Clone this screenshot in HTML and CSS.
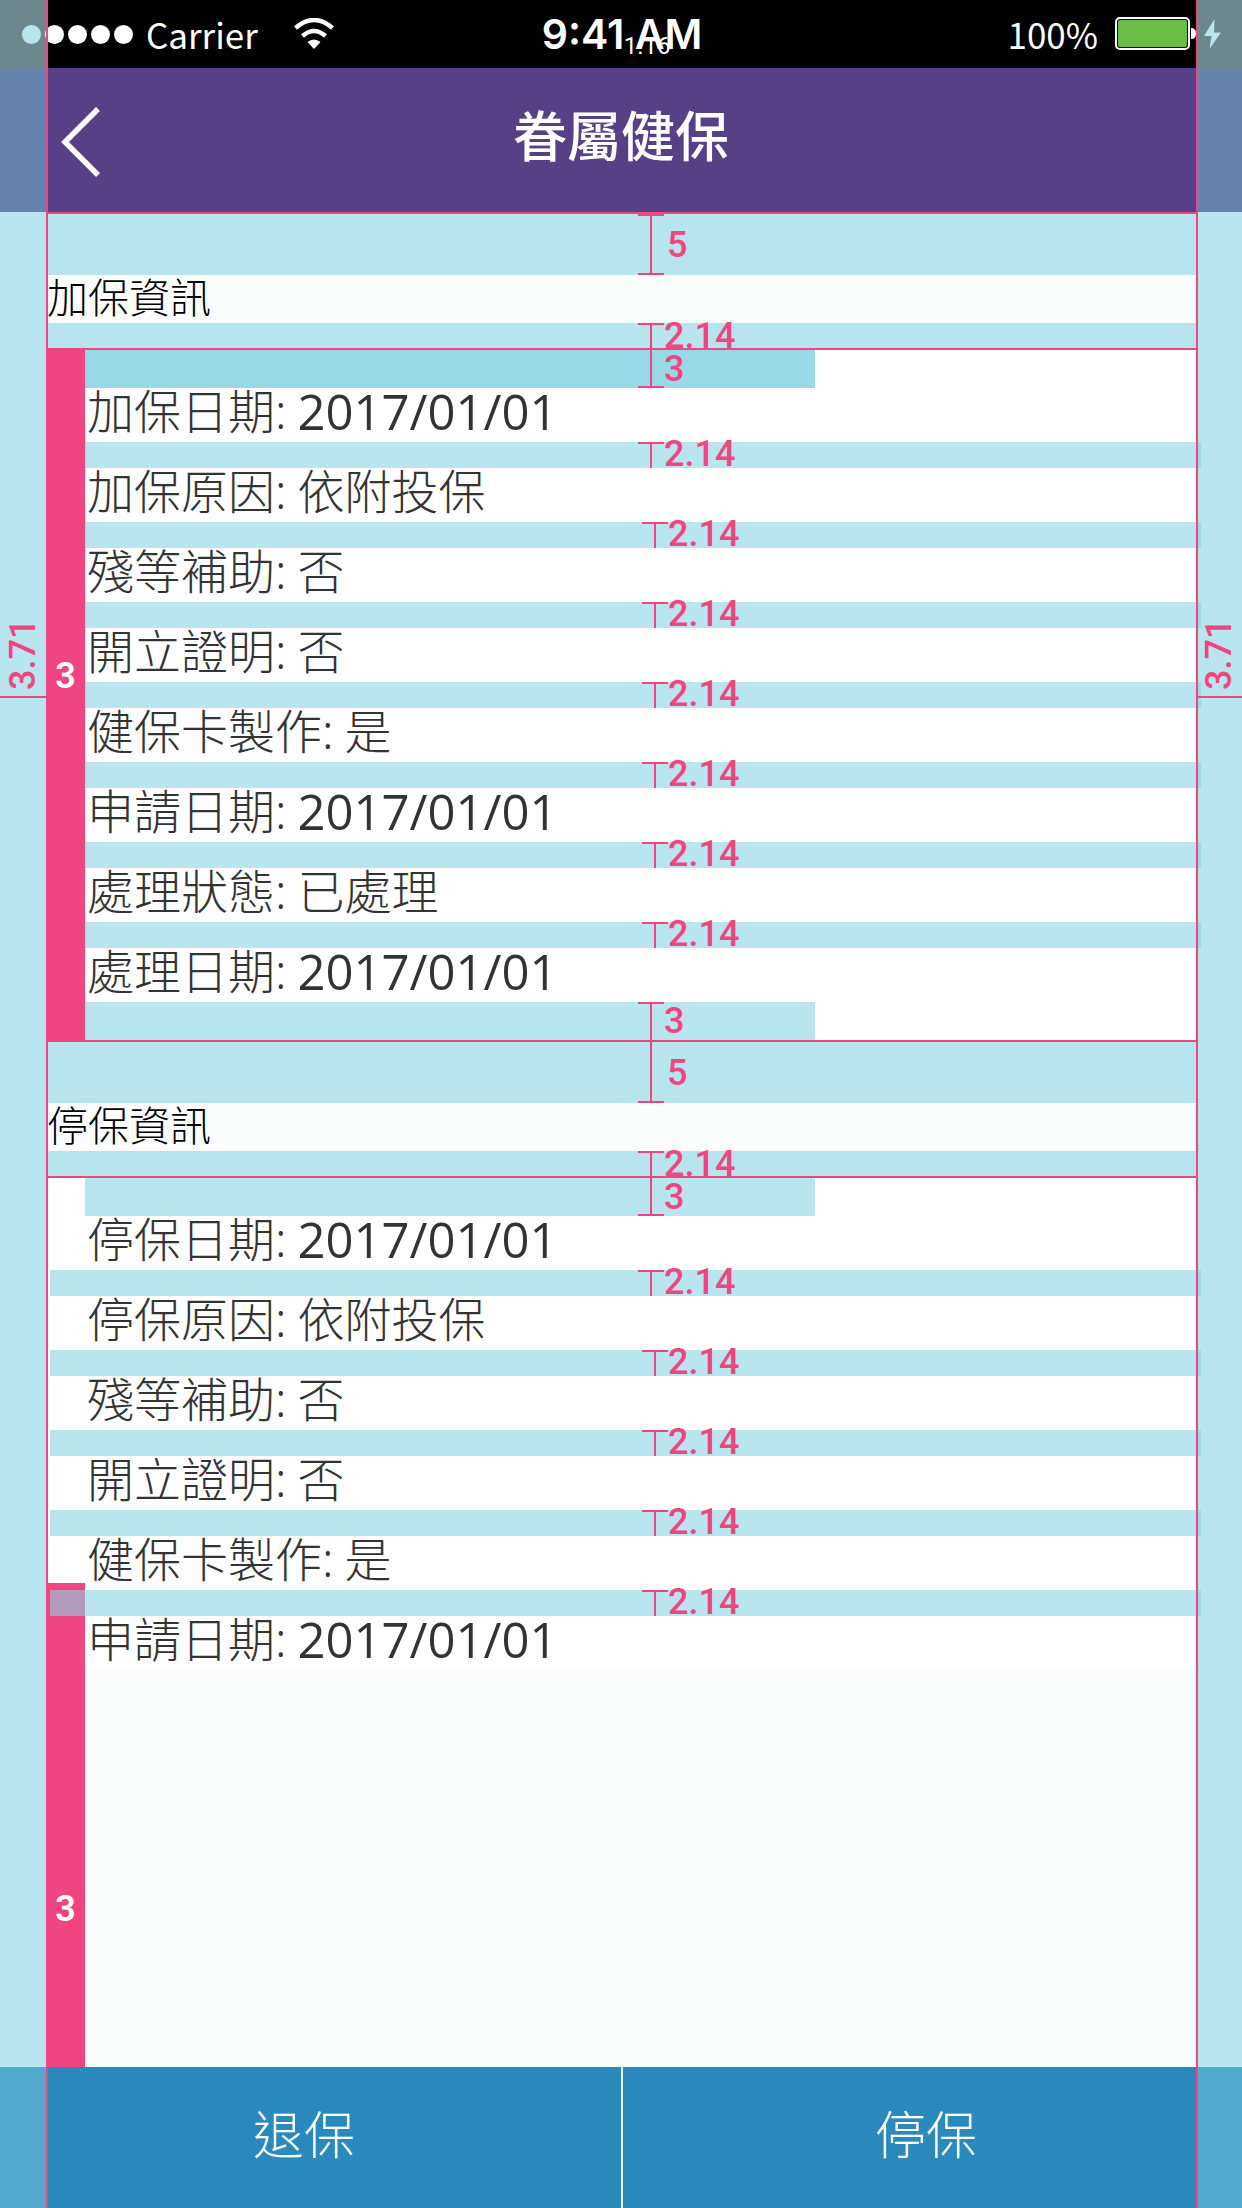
FILE: index.html
```html
<!DOCTYPE html>
<html lang="zh-Hant">
<head>
<meta charset="utf-8">
<meta name="viewport" content="width=device-width, initial-scale=1">
<title>眷屬健保</title>
<link rel="stylesheet" href="styles.css">
</head>
<body>
<div class="page">
  <div class="status">
    <div class="status-left">
      <span class="dots"><i class="dot dot-tinted"></i><i class="dot"></i><i class="dot"></i><i class="dot"></i><i class="dot"></i></span>
      <span class="carrier">Carrier</span>
      <svg class="wifi" width="40" height="32" viewBox="0 0 40 32" aria-hidden="true">
        <path d="M1.500 10Q20-6 38.500 10" fill="none" stroke="#fff" stroke-width="4.500"/>
        <path d="M8.500 18Q20 8 31.500 18" fill="none" stroke="#fff" stroke-width="4.500"/>
        <path d="M13.500 24Q20 19 26.500 24L20 31Z" fill="#fff"/>
      </svg>
    </div>
    <div class="clock">9:41 AM<span class="clock-note">1.16</span></div>
    <div class="status-right">
      <span class="percent">100%</span>
      <svg class="battery" width="82" height="34" viewBox="0 0 82 34" aria-hidden="true">
        <rect x="1" y="1" width="73" height="31" rx="4" fill="#000" stroke="#fff" stroke-width="2"/>
        <rect x="3" y="3" width="69" height="27" rx="2" fill="#6abd45"/>
        <path d="M76 11Q81 11 81 16.500T76 22Z" fill="#fff"/>
      </svg>
      <svg class="bolt" width="18" height="30" viewBox="0 0 18 30" aria-hidden="true">
        <path d="M10.500 0L0 17H7.500L5.500 30L17 13.500H10Z" fill="#b9e5ee"/>
      </svg>
    </div>
  </div>

  <header class="header">
    <button class="back" type="button" aria-label="返回">
      <svg width="40" height="70" viewBox="0 0 40 70" aria-hidden="true"><path d="M37 2L4 35L37 68" fill="none" stroke="#fff" stroke-width="5.500"/></svg>
    </button>
    <h1 class="title">眷屬健保</h1>
  </header>

  <main class="main">
    <section class="section">
      <div class="gap gap-5"><span class="ibeam"></span><span class="num">5</span></div>
      <h2 class="section-title">加保資訊</h2>
      <div class="gap gap-2"><span class="ibeam open"></span><span class="num">2.14</span></div>
      <div class="card">
        <div class="bar"><span>3</span></div>
        <div class="gap gap-3 strong"><span class="ibeam hang"></span><span class="num">3</span></div>
        <dl class="list">
          <div class="row"><dt>加保日期:</dt><dd class="date">2017/01/01</dd></div>
          <div class="row"><dt>加保原因:</dt><dd>依附投保</dd></div>
          <div class="row"><dt>殘等補助:</dt><dd>否</dd></div>
          <div class="row"><dt>開立證明:</dt><dd>否</dd></div>
          <div class="row"><dt>健保卡製作:</dt><dd>是</dd></div>
          <div class="row"><dt>申請日期:</dt><dd class="date">2017/01/01</dd></div>
          <div class="row"><dt>處理狀態:</dt><dd>已處理</dd></div>
          <div class="row"><dt>處理日期:</dt><dd class="date">2017/01/01</dd></div>
        </dl>
        <div class="gap gap-3"><span class="ibeam open"></span><span class="num">3</span></div>
      </div>
    </section>

    <section class="section section-last">
      <div class="gap gap-5"><span class="ibeam hang"></span><span class="num">5</span></div>
      <h2 class="section-title">停保資訊</h2>
      <div class="gap gap-2"><span class="ibeam open"></span><span class="num">2.14</span></div>
      <div class="card card-last">
        <div class="bar bar-low"><span>3</span></div>
        <div class="gap gap-3"><span class="ibeam hang"></span><span class="num">3</span></div>
        <dl class="list wide">
          <div class="row"><dt>停保日期:</dt><dd class="date">2017/01/01</dd></div>
          <div class="row"><dt>停保原因:</dt><dd>依附投保</dd></div>
          <div class="row"><dt>殘等補助:</dt><dd>否</dd></div>
          <div class="row"><dt>開立證明:</dt><dd>否</dd></div>
          <div class="row"><dt>健保卡製作:</dt><dd>是</dd></div>
          <div class="row"><dt>申請日期:</dt><dd class="date">2017/01/01</dd></div>
        </dl>
      </div>
    </section>
  </main>

  <footer class="actions">
    <button class="action" type="button">退保</button>
    <button class="action" type="button">停保</button>
  </footer>

  <div class="guides"></div>
  <div class="side side-left"><span>3.71</span></div>
  <div class="side side-right"><span>3.71</span></div>
</div>
</body>
</html>
```
FILE: styles.css
```css
:root {
  --pink: #ef4681;
  --band: rgba(138, 212, 227, .6);
  --gutter: 46px;
  --inset: 39px;
  --side: #b9e5ee;
}

*, *::before { box-sizing: border-box; }

body {
  margin: 0;
  font-family: "Noto Sans", "Noto Sans CJK TC", sans-serif;
}

h1, h2, dl, dd { margin: 0; }

button {
  padding: 0;
  border: 0;
  background: none;
  color: inherit;
  font: inherit;
}

.page {
  position: relative;
  display: flex;
  flex-direction: column;
  min-height: 100vh;
  background: #fbfdfc;
}

/* Every block paints its own tinted side margins */
.status, .header, .actions {
  background-image:
    linear-gradient(var(--side), var(--side)),
    linear-gradient(var(--side), var(--side));
  background-position: left, right;
  background-size: var(--gutter) 100%;
  background-repeat: no-repeat;
}

/* Status bar */
.status {
  --side: #6c888c;
  display: grid;
  grid-template-columns: 1fr auto 1fr;
  align-items: center;
  height: 68px;
  padding: 0 20px 0 22px;
  background-color: #000;
  color: #fff;
}

.status-left, .status-right { display: flex; align-items: center; }
.status-right { justify-content: flex-end; }
.dots { display: flex; gap: 4px; margin-right: 13px; }
.dot { width: 19px; height: 19px; border-radius: 50%; background: #fff; }
.dot-tinted { background: #b9e5ee; }
.carrier, .percent { font-family: "Noto Sans CJK TC", sans-serif; font-size: 35px; line-height: 66px; }
.wifi { margin-left: 36px; }
.battery { margin: 0 7px 0 17px; }
.clock { position: relative; font: 600 41px/68px Inter, sans-serif; }
.clock-note {
  position: absolute;
  left: 82px;
  top: 32px;
  font: 400 24px/28px Roboto, sans-serif;
}

/* Header */
.header {
  --side: #6683ae;
  display: grid;
  grid-template-columns: 1fr auto 1fr;
  align-items: center;
  height: 144px;
  padding: 4px 61px 0;
  background-color: #584086;
  color: #fff;
}

.back { justify-self: start; height: 70px; }
.back svg { display: block; }
.title { padding-bottom: 12px; font-size: 54px; font-weight: 500; line-height: 72px; }

/* Content */
.main {
  display: flex;
  flex: 1;
  flex-direction: column;
  border: solid #b9e5ee;
  border-width: 0 45px 0 46px;
}

.section { border-top: 2px solid var(--pink); }
.section-last { display: flex; flex: 1; flex-direction: column; }

.section-title {
  padding-left: 1px;
  height: 48px;
  font-size: 41px;
  font-weight: 300;
  line-height: 44px;
  color: #000;
}

.gap {
  display: flex;
  align-items: center;
  background: var(--band);
  color: var(--pink);
  font: 500 36px/26px Roboto, sans-serif;
}

.gap-5 { height: 61px; padding-left: 592px; }
.gap-2 { height: 25px; padding-left: 592px; }
.gap-3 { width: 730px; height: 38px; margin-left: var(--inset); padding-left: 553px; }
.gap-5 .num { margin-left: 3px; }
.strong { background: #97d9e6; }

.ibeam {
  align-self: stretch;
  width: 26px;
  border: solid var(--pink);
  border-width: 2px 0;
  background: linear-gradient(var(--pink), var(--pink)) center / 2px 100% no-repeat;
}
.open { border-bottom: 0; }
.hang { border-top: 0; }

.card { position: relative; border-top: 2px solid var(--pink); background: #fff; }
.card-last { flex: 1; background: linear-gradient(#fff 490px, #fbfdfc 490px); }

.bar {
  position: absolute;
  inset: 0 auto 0 0;
  width: var(--inset);
  padding-top: 308px;
  background: var(--pink);
  color: #fff;
  font: 600 36px/36px Roboto, sans-serif;
  text-align: center;
}
.bar-low { top: 405px; }

/* The bands between rows reach slightly into the right margin */
.list { position: relative; margin: 0 -4px 0 var(--inset); }

.row {
  display: flex;
  flex-wrap: wrap;
  align-content: flex-start;
  column-gap: 11px;
  height: 54px;
  padding-left: 2px;
  color: #333;
  font-size: 47px;
  font-weight: 300;
  line-height: 46px;
}
.row + .row { height: 80px; }
.date { font-family: "Open Sans", sans-serif; font-size: 49px; font-weight: 400; }

.row + .row::before {
  content: "2.14";
  flex: 0 0 calc(100% + 2px);
  height: 26px;
  margin-left: -2px;
  padding-left: 583px;
  color: var(--pink);
  font: 500 36px/24px Roboto, sans-serif;
  background:
    linear-gradient(var(--pink), var(--pink)) 557px 0 / 26px 2px no-repeat,
    linear-gradient(var(--pink), var(--pink)) 569px 0 / 2px 100% no-repeat,
    var(--band);
}
.row:nth-child(2)::before {
  padding-left: 579px;
  background-position: 553px 0, 565px 0, 0 0;
}

.wide { margin-left: 4px; }
.wide .row { padding-left: 37px; }
.wide .row + .row::before {
  flex-basis: calc(100% + 37px);
  margin-left: -37px;
  padding-left: 618px;
  background-position: 592px 0, 604px 0, 0 0;
}
.wide .row:nth-child(2)::before {
  padding-left: 614px;
  background-position: 588px 0, 600px 0, 0 0;
}

/* Bottom actions */
.actions {
  --side: #52a8cd;
  display: grid;
  grid-template-columns: 1fr 1fr;
  background-color: #2a8abe;
  color: #fff;
}
.action { height: 141px; padding: 0 13px 12px 0; font-size: 51px; font-weight: 300; }
.action + .action { border-left: 2px solid #e4f1f7; }

/* Measuring overlay */
.guides {
  position: absolute;
  inset: 0 44px 0 46px;
  border: solid var(--pink);
  border-width: 0 2px;
  pointer-events: none;
}
.side {
  position: absolute;
  top: 618px;
  width: var(--gutter);
  border-bottom: 2px solid var(--pink);
  color: var(--pink);
}
.side span {
  display: block;
  height: 78px;
  padding-top: 6px;
  writing-mode: vertical-rl;
  transform: rotate(180deg);
  font: 500 36px/46px Roboto, sans-serif;
}
.side-left { left: 0; }
.side-right { right: 0; }
```
